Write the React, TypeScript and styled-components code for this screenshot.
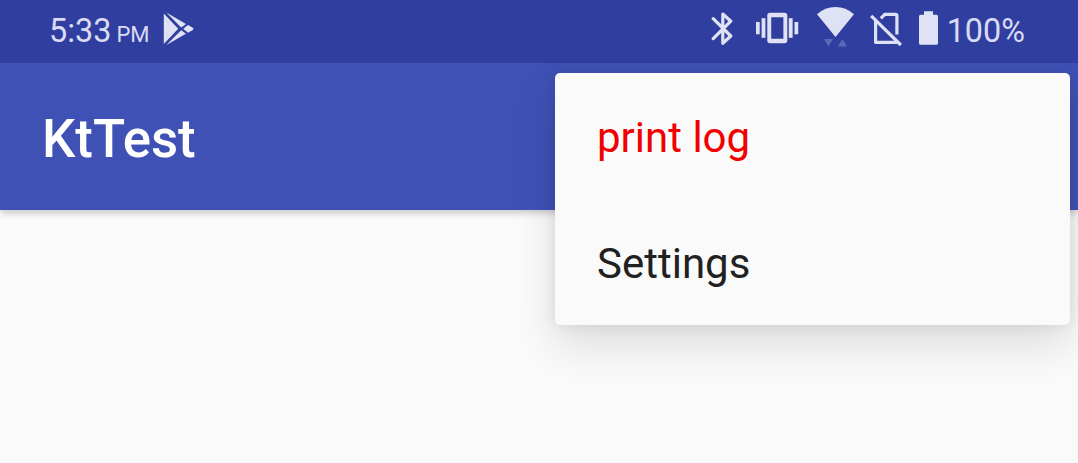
import React from 'react';
import styled, { createGlobalStyle } from 'styled-components';

const GlobalStyle = createGlobalStyle`
  body {
    margin: 0;
    background: #fafafa;
    font-family: Roboto, sans-serif;
    overflow: hidden;
  }
`;

const Screen = styled.div`
  position: relative;
  height: 463px;
  overflow: hidden;
  background: #fafafa;
`;

const StatusBar = styled.header`
  display: flex;
  justify-content: space-between;
  box-sizing: border-box;
  height: 63px;
  padding: 0 53px 0 49px;
  background: #303f9f;
  color: #d9dcf3;
`;

const StatusGroup = styled.div`
  display: flex;
  align-items: flex-start;
`;

const StatusText = styled.span<{ $width: number }>`
  width: ${({ $width }) => $width}px;
  flex: none;
  font-size: 32.4px;
  line-height: 38px;
  margin-top: 12px;
  white-space: nowrap;
`;

const BatteryLevel = styled(StatusText)`
  text-align: right;
`;

const Meridiem = styled.span`
  font-size: 22px;
  margin-left: 5px;
`;

const Glyph = styled.svg<{ $gap?: number }>`
  display: block;
  flex: none;
  height: 63px;
  margin-left: ${({ $gap = 0 }) => $gap}px;
  fill: #dfe1f5;
`;

const AppBar = styled.div`
  display: flex;
  align-items: center;
  height: 147px;
  padding-left: 42px;
  background: #3f51b5;
  box-shadow: 0 5px 6px -1px rgba(0, 0, 0, 0.17);
`;

const Title = styled.h1`
  margin: 5px 0 0;
  font-size: 52.8px;
  line-height: 62px;
  font-weight: 500;
  color: #fff;
`;

const PopupMenu = styled.ul`
  position: absolute;
  top: 73px;
  right: 8px;
  width: 515px;
  height: 252px;
  margin: 0;
  padding: 0;
  list-style: none;
  border-radius: 5px;
  background: #fafafa;
  box-shadow: 0 20px 44px rgba(0, 0, 0, 0.12), 0 0 14px rgba(0, 0, 0, 0.09);
`;

const MenuItem = styled.li<{ $color?: string }>`
  display: flex;
  align-items: center;
  box-sizing: border-box;
  height: 126px;
  padding: 3px 42px 0;
  font-size: 42px;
  color: ${({ $color = '#212121' }) => $color};
`;

export default function App() {
  return (
    <>
      <GlobalStyle />
      <Screen>
        <StatusBar>
          <StatusGroup>
            <StatusText $width={101}>
              5:33<Meridiem>PM</Meridiem>
            </StatusText>
            <Glyph $gap={13} width="32" viewBox="163 0 32 63">
              <path d="M163.8 13.5 L178.2 28.8 L163.8 44Z" />
              <path d="M166.3 12.6 L186 23.9 L181.2 27.6Z" />
              <path d="M166.3 44.9 L181.2 30.2 L186 33.8Z" />
              <path d="M188 25 L192.8 27.7 Q194.2 28.8 192.8 30 L188 32.7 L183.2 28.8Z" />
            </Glyph>
          </StatusGroup>
          <StatusGroup>
            <Glyph width="23" viewBox="711 0 23 63">
              <path
                d="M713.2 18.7 L730.8 36 L722.8 43.2 V14 L730.8 21.2 L713.2 38.6"
                fill="none"
                stroke="#dfe1f5"
                strokeWidth="3.2"
                strokeLinejoin="round"
                strokeLinecap="round"
              />
            </Glyph>
            <Glyph $gap={21} width="44" viewBox="755 0 44 63">
              <rect x="756" y="22" width="3.7" height="12.3" />
              <rect x="761.6" y="18.2" width="3.8" height="19.6" />
              <path
                fillRule="evenodd"
                d="M770 12.7H784.6Q787.3 12.7 787.3 15.4V40.6Q787.3 43.3 784.6 43.3H770Q767.3 43.3 767.3 40.6V15.4Q767.3 12.7 770 12.7ZM771.2 17.2V38.8H783.4V17.2Z"
              />
              <rect x="788.8" y="18.2" width="3.8" height="19.6" />
              <rect x="794.5" y="22" width="3.7" height="12.3" />
            </Glyph>
            <Glyph $gap={17} width="39" viewBox="816 0 39 63">
              <path d="M817 14.3 Q825 7 835.5 7 Q846 7 854 14.3 L835.5 37Z" />
              <path fill="#5d69b6" d="M824 39H833L828.5 46.4Z M837.8 46.4H847L842.4 39Z" />
            </Glyph>
            <Glyph $gap={15} width="33" viewBox="870 0 33 63">
              <g fill="none" stroke="#dfe1f5" strokeWidth="3.2">
                <path d="M875.6 20V42.3H897" strokeLinejoin="round" />
                <path d="M880.8 18.3 L884.8 14.3H895.4Q896.9 14.3 896.9 15.8V34.5" />
                <path d="M871.2 15.8L900.8 45" />
              </g>
            </Glyph>
            <Glyph $gap={15} width="21" viewBox="918 0 21 63">
              <path d="M924 11.2H933V14.7H936.5Q938 14.7 938 16.2V43.3Q938 44.8 936.5 44.8H920.5Q919 44.8 919 43.3V16.2Q919 14.7 920.5 14.7H924Z" />
            </Glyph>
            <BatteryLevel $width={86}>100%</BatteryLevel>
          </StatusGroup>
        </StatusBar>
        <AppBar>
          <Title>KtTest</Title>
        </AppBar>
        <PopupMenu>
          <MenuItem $color="#f00000">print log</MenuItem>
          <MenuItem>Settings</MenuItem>
        </PopupMenu>
      </Screen>
    </>
  );
}
